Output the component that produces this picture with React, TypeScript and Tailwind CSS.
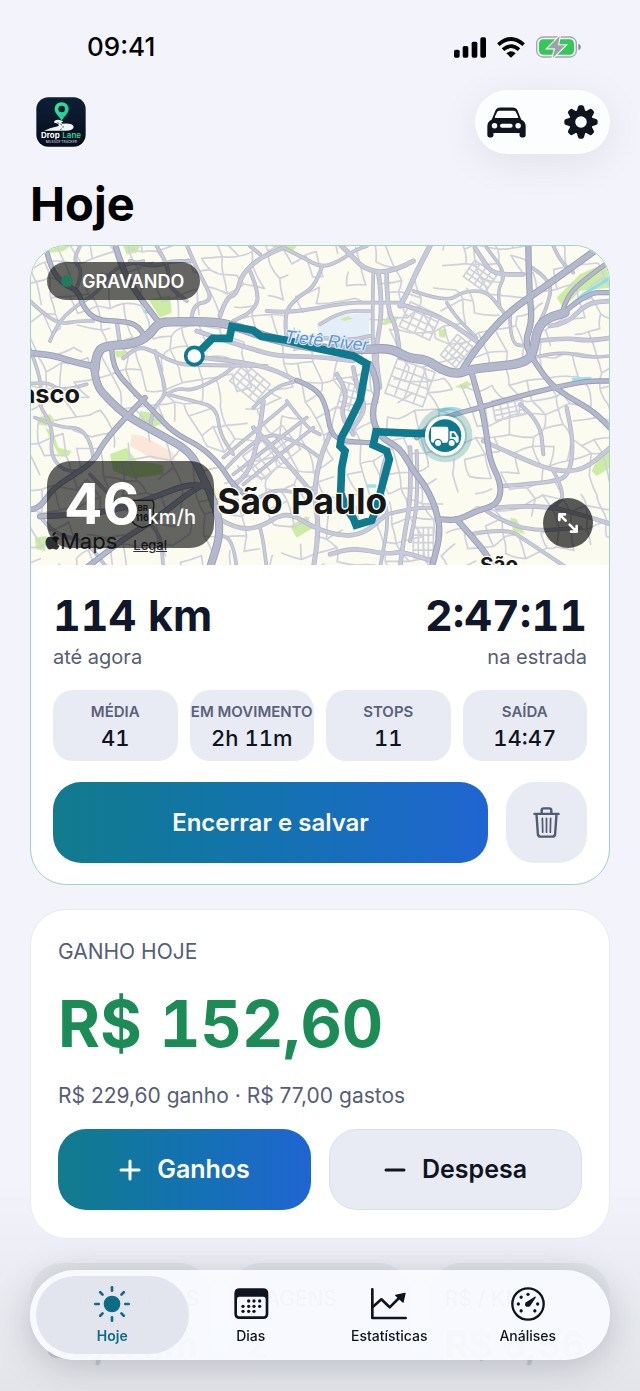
import { useState } from "react";
import type { ReactNode } from "react";

type Road = { w: number; pts: string };

// width + waypoints, in map units (3 per pixel)
const HIGHWAYS: Road[] = [
  { w: 18, pts: "20,335 90,340 150,360 215,375" },
  { w: 26, pts: "225,385 228,330 265,313 340,310 385,285 415,245 460,242 590,242 660,260 740,290 900,325 1040,325 1115,322 1165,352 1220,355 1260,385 1310,400 1350,385 1440,375 1500,368 1540,345 1550,265 1580,232 1635,215" },
  { w: 14, pts: "1625,220 1700,155 1770,155" },
  { w: 14, pts: "75,10 90,80 130,130 175,150 190,200 230,238 300,240 350,250 378,290" },
  { w: 16, pts: "285,10 310,90 345,150 412,238" },
  { w: 22, pts: "222,370 225,430 270,480 320,525 420,580 510,630 545,700 590,800 602,880 570,980" },
  { w: 14, pts: "275,325 278,380 330,440 400,510 460,575 540,615 600,670 640,735 690,770" },
  { w: 15, pts: "375,470 320,525 250,605 225,655 180,690 100,740 60,800 20,808" },
  { w: 17, pts: "1525,10 1527,150 1537,240 1515,300 1535,350" },
  { w: 19, pts: "1730,25 1600,120 1460,215 1370,320 1322,395" },
  { w: 13, pts: "1770,60 1700,110 1645,160 1625,220" },
  { w: 15, pts: "1540,355 1580,420 1640,465 1720,510 1775,565" },
  { w: 14, pts: "1190,590 1230,550 1300,520 1380,500 1500,465 1600,440 1700,420 1775,420" },
  { w: 16, pts: "1355,395 1370,450 1385,500 1400,580 1410,660 1445,730 1435,790 1370,810 1310,838 1260,835" },
  { w: 17, pts: "1050,370 1080,430 1052,520 1080,590 1140,620 1180,690 1220,740 1250,810 1262,880 1235,980" },
  { w: 17, pts: "1310,835 1350,880 1400,940 1420,980" },
  { w: 13, pts: "830,418 890,440 920,500 930,570 960,600 1050,605" },
  { w: 16, pts: "60,826 250,820 400,770 500,730 560,735" },
  { w: 16, pts: "200,980 300,900 400,840 500,760 560,725" },
];

const ROADS: Road[] = [
  { w: 12, pts: "600,225 618,170 650,160 665,100 720,50 790,20" },
  { w: 10, pts: "515,240 515,190 580,180 545,110 520,60 500,10" },
  { w: 10, pts: "690,90 720,160 700,210 640,240" },
  { w: 10, pts: "720,40 690,15" },
  { w: 10, pts: "790,20 850,50 905,80 960,60 1000,30 1040,15" },
  { w: 10, pts: "800,290 790,220 830,170 880,140 905,80" },
  { w: 10, pts: "740,210 800,215 900,200" },
  { w: 11, pts: "290,240 300,310" },
  { w: 10, pts: "310,352 350,315 400,330 440,355 490,372 560,372 740,375" },
  { w: 12, pts: "530,270 620,300 700,325 770,345 900,348 1000,360" },
  { w: 12, pts: "550,350 640,360 750,380 830,420" },
  { w: 9, pts: "405,330 425,400 440,460 400,500 390,560" },
  { w: 9, pts: "440,460 470,440 515,450 600,410 650,370" },
  { w: 9, pts: "440,460 520,480 590,500 600,580 640,640" },
  { w: 9, pts: "20,170 60,210 120,250 170,240 220,240" },
  { w: 9, pts: "90,300 110,250 160,200 240,150 280,80 370,60" },
  { w: 9, pts: "170,140 190,90 160,60 180,15" },
  { w: 10, pts: "410,15 450,80 440,130 500,180" },
  { w: 10, pts: "330,60 400,80 450,60 520,60" },
  { w: 9, pts: "20,430 80,420 120,450 200,430" },
  { w: 9, pts: "20,300 70,420 50,480 100,560 90,640 130,690 180,690" },
  { w: 9, pts: "45,530 120,560 180,560 210,600 220,650" },
  { w: 9, pts: "900,200 980,185 1060,185 1140,185" },
  { w: 13, pts: "960,10 1000,50 1030,80 1075,95 1130,85 1180,60" },
  { w: 14, pts: "1230,15 1190,90 1165,150 1140,195" },
  { w: 12, pts: "1075,95 1090,200 1065,330 1080,440" },
  { w: 9, pts: "1060,95 1055,300 1070,430" },
  { w: 12, pts: "1100,90 1100,200 1130,260 1140,350" },
  { w: 12, pts: "1140,190 1230,215 1300,250 1375,305" },
  { w: 9, pts: "1180,150 1280,185 1330,150 1400,150 1440,200 1460,225" },
  { w: 8, pts: "1280,185 1300,220 1370,290" },
  { w: 12, pts: "1365,20 1390,60 1420,100 1510,100" },
  { w: 8, pts: "1440,200 1430,150 1460,100 1400,20" },
  { w: 9, pts: "1600,15 1620,60 1660,95" },
  { w: 9, pts: "1535,80 1600,120 1580,200 1560,240" },
  { w: 12, pts: "1590,255 1640,250 1700,185 1775,180" },
  { w: 12, pts: "1550,300 1640,290 1700,300 1775,290" },
  { w: 8, pts: "1540,350 1620,330 1700,350 1775,345" },
  { w: 9, pts: "1470,220 1470,310 1520,315" },
  { w: 9, pts: "900,250 960,210 1050,210" },
  { w: 10, pts: "900,290 980,300 1050,285" },
  { w: 12, pts: "1390,600 1500,650 1600,690 1690,690 1770,620" },
  { w: 11, pts: "1450,735 1600,725 1650,700 1660,600 1640,500" },
  { w: 12, pts: "1430,800 1560,790 1680,820 1775,850" },
  { w: 10, pts: "1400,810 1460,850 1560,870 1680,860" },
  { w: 10, pts: "1350,880 1460,860 1520,900 1640,980" },
  { w: 9, pts: "1600,690 1640,760 1600,800" },
  { w: 10, pts: "1500,490 1560,540 1570,640" },
  { w: 12, pts: "600,835 650,865 720,860 800,810 880,860 960,885 1030,880 1100,820" },
  { w: 10, pts: "1100,820 1180,800 1250,800" },
  { w: 12, pts: "1170,620 1175,760 1150,900 1140,980" },
  { w: 10, pts: "1190,630 1195,780 1170,900" },
  { w: 9, pts: "1100,640 1070,720 1110,820 1080,980" },
  { w: 13, pts: "880,980 900,870 880,760 900,650 930,580" },
  { w: 12, pts: "950,400 985,450 960,520 1000,580" },
  { w: 12, pts: "1000,380 1010,440 1040,500 1000,560" },
  { w: 9, pts: "620,680 720,570 830,600 900,650" },
  { w: 12, pts: "730,480 720,570 690,690 640,735" },
  { w: 9, pts: "640,700 860,530" },
  { w: 9, pts: "670,730 880,560" },
  { w: 9, pts: "610,650 800,490" },
  { w: 12, pts: "700,560 760,620 830,700 880,760" },
  { w: 9, pts: "800,480 860,560 900,580" },
  { w: 9, pts: "700,780 760,740 840,760 880,740" },
  { w: 9, pts: "700,500 760,440 830,420" },
  { w: 9, pts: "210,700 300,800 420,860 430,980" },
  { w: 9, pts: "60,826 100,880 200,900 260,980" },
  { w: 9, pts: "650,980 640,900 600,880" },
  { w: 9, pts: "740,980 730,900 720,860" },
  { w: 12, pts: "1235,960 1150,930 1100,940 1000,920 930,940" },
];

const PARKS = [
  "70,15 150,15 130,30 90,35",
  "310,15 360,15 350,35 320,40",
  "385,175 450,165 455,215 420,230",
  "285,330 320,330 310,350 288,348",
  "755,15 830,15 820,28 770,25",
  "50,530 90,520 105,540 80,555 55,550",
  "360,510 430,520 435,545 390,562 355,540",
  "270,640 320,620 350,660 430,672 430,700 340,712 280,690",
  "45,890 80,885 75,930 48,925",
  "810,855 860,825 880,860 830,890",
  "1085,250 1100,230 1135,225 1130,240 1095,252",
  "1255,265 1280,265 1275,290 1258,288",
  "1305,438 1340,420 1355,430 1335,445",
  "1610,170 1680,100 1770,60 1770,140 1680,150 1630,200",
  "1715,690 1740,640 1770,615 1770,680 1730,705",
  "1470,830 1490,835 1515,880 1480,870",
  "560,760 585,740 590,800 570,800",
  "75,560 100,575 115,620 155,630 145,645 115,640",
];

const ROUTE =
  "M540 330 L578 292 L628 292 L636 256 L700 268 L724 286 L800 298 L905 325 L1000 345 L1040 368 L1020 478 L980 560 L964 590 L960 615 L975 630 L965 680 L962 755 L978 800 L1000 832 L1008 852 L1055 838 L1070 800 L1085 740 L1108 655 L1100 630 L1060 612 L1068 572 L1180 577 L1240 577";

// rounds the corners of a waypoint list through its midpoints
function curve(pts: string) {
  const p = pts.split(" ").map((s) => s.split(",").map(Number));
  let d = `M${p[0][0]} ${p[0][1]}`;
  for (let i = 1; i < p.length - 1; i++) {
    const mx = (p[i][0] + p[i + 1][0]) / 2;
    const my = (p[i][1] + p[i + 1][1]) / 2;
    d += ` Q${p[i][0]} ${p[i][1]} ${mx} ${my}`;
  }
  const last = p[p.length - 1];
  return `${d} L${last[0]} ${last[1]}`;
}

// side streets: a jittered grid with some of the blocks left open
function buildStreets() {
  let seed = 29;
  const rnd = () => {
    seed = (seed * 1664525 + 1013904223) % 4294967296;
    return seed / 4294967296;
  };
  const step = 50;
  const cols = 40;
  const rows = 24;
  const nodes: number[][][] = [];
  for (let r = 0; r < rows; r++) {
    nodes.push([]);
    for (let c = 0; c < cols; c++) {
      nodes[r].push([
        Math.round(c * step + r * 14 - 300 + (rnd() - 0.5) * 34),
        Math.round(r * step - c * 8 + 30 + (rnd() - 0.5) * 34),
      ]);
    }
  }
  let d = "";
  const link = (a: number[], b: number[]) => {
    const mx = Math.round((a[0] + b[0]) / 2 + (rnd() - 0.5) * 12);
    const my = Math.round((a[1] + b[1]) / 2 + (rnd() - 0.5) * 12);
    d += `M${a[0]} ${a[1]}Q${mx} ${my} ${b[0]} ${b[1]}`;
  };
  for (let r = 0; r < rows; r++) {
    for (let c = 0; c < cols; c++) {
      if (c + 1 < cols && rnd() > 0.42) link(nodes[r][c], nodes[r][c + 1]);
      if (r + 1 < rows && rnd() > 0.42) link(nodes[r][c], nodes[r + 1][c]);
    }
  }
  return d;
}

// dense downtown blocks: x, y, width, height, angle
const BLOCKS = [
  [1340, 75, 80, 60, 35],
  [1110, 370, 120, 110, 20],
  [1150, 200, 100, 80, 25],
  [640, 390, 100, 70, 40],
  [960, 430, 70, 80, 15],
  [680, 590, 150, 90, -38],
  [1180, 860, 60, 90, 0],
  [1420, 470, 90, 60, -12],
  [1270, 300, 80, 60, -50],
];

const STREETS = buildStreets();

function CityMap() {
  return (
    <svg
      viewBox="30 15 1740 957"
      preserveAspectRatio="xMidYMid slice"
      className="block h-full w-full"
      role="img"
      aria-label="Mapa do trajeto em São Paulo"
      fill="none"
      strokeLinejoin="round"
      strokeLinecap="round"
    >
      <rect x="0" y="0" width="1800" height="1000" fill="#fbfbef" />
      {PARKS.map((p) => (
        <polygon key={p} points={p} fill="#caeda3" />
      ))}
      <path d="M335 580 L370 585 L460 635 L465 660 L400 655 L330 615Z M740 600 L775 605 L760 625Z" fill="#fbe6da" />

      <path d={STREETS} stroke="#d0d1dd" strokeWidth="5" />
      {BLOCKS.map(([x, y, w, h, a]) => (
        <g key={`${x}-${y}`} transform={`rotate(${a} ${x + w / 2} ${y + h / 2})`} stroke="#d0d1dd" strokeWidth="5">
          <rect x={x} y={y} width={w} height={h} />
          <path d={`M${x} ${y + h / 4}h${w}M${x} ${y + h / 2}h${w}M${x} ${y + (h * 3) / 4}h${w}`} />
          <path d={`M${x + w / 4} ${y}v${h}M${x + w / 2} ${y}v${h}M${x + (w * 3) / 4} ${y}v${h}`} />
        </g>
      ))}

      <path d="M890 245 L950 222 L1050 215 L1046 290 L900 300Z" fill="#e4eef8" />
      <path d="M960 235 L985 226 L998 233 L975 240Z" fill="#caeda3" />
      <path d="M1632 212 L1690 160 L1740 130 L1770 110" stroke="#8adcf2" strokeWidth="9" />
      <path d="M1260 510 Q1290 495 1330 510 M1660 415 L1710 412 M375 212 L385 214 M820 800 L825 830 M1045 735 L1065 735" stroke="#9be0ee" strokeWidth="10" />

      {ROADS.map((r) => (
        <path key={r.pts} d={curve(r.pts)} stroke="#b1b4c6" strokeWidth={r.w + 2} />
      ))}
      {ROADS.map((r) => (
        <path key={r.pts} d={curve(r.pts)} stroke="#c8cad9" strokeWidth={r.w - 2} />
      ))}
      {HIGHWAYS.map((r) => (
        <path key={r.pts} d={curve(r.pts)} stroke="#959bb2" strokeWidth={r.w + 2} />
      ))}
      {HIGHWAYS.map((r) => (
        <path key={r.pts} d={curve(r.pts)} stroke="#b3b8cd" strokeWidth={r.w - 3} />
      ))}

      <g strokeWidth="4">
        <path d="M338 778 H398 Q404 790 400 802 V838 Q398 852 368 860 Q338 852 336 838 V802 Q332 790 338 778Z" fill="#e3e3de" stroke="#3a3a3a" />
        <text x="368" y="810" fontSize="24" fontWeight="700" textAnchor="middle" fill="#333">BR</text>
        <text x="366" y="840" fontSize="27" fontWeight="700" textAnchor="middle" fill="#333">116</text>
      </g>

      <path d={ROUTE} stroke="#0f7a8e" strokeWidth="23" strokeLinejoin="miter" />
      <circle cx="523" cy="345" r="26" fill="#fff" stroke="#0f7a8e" strokeWidth="11" />

      <g paintOrder="stroke" stroke="#fdfdf6">
        <text
          x="793"
          y="303"
          fontSize="52"
          fontStyle="italic"
          fill="#5d97cf"
          stroke="#e4eef8"
          strokeWidth="6"
          transform="rotate(6 793 303)"
          className="font-['Liberation_Sans',sans-serif]"
        >
          Tietê River
        </text>
        <text x="180" y="486" fontSize="76" fontWeight="700" textAnchor="end" fill="#161616" strokeWidth="8">Osasco</text>
        <text x="592" y="820" fontSize="106" fontWeight="700" fill="#161616" strokeWidth="8">São Paulo</text>
        <text x="1380" y="992" fontSize="62" fontWeight="700" fill="#161616" strokeWidth="8">São</text>
      </g>

      <circle cx="1275" cy="582" r="82" fill="#0f7a8e" opacity="0.24" />
      <circle cx="1275" cy="584" r="66" fill="#0f7a8e" opacity="0.25" />
      <circle cx="1275" cy="584" r="60" fill="#fff" />
      <circle cx="1275" cy="584" r="49" fill="#10788c" />
      <g fill="#fff">
        <rect x="1233" y="557" width="52" height="48" rx="6" />
        <path d="M1289 571 H1301 Q1306 571 1308 575 L1316 588 V601 Q1316 605 1312 605 H1289Z" />
        <path d="M1295 576 H1301 L1309 588 H1295Z" fill="#10788c" />
        <circle cx="1254" cy="606" r="11" stroke="#10788c" strokeWidth="4" />
        <circle cx="1295" cy="606" r="11" stroke="#10788c" strokeWidth="4" />
      </g>
    </svg>
  );
}

function StatusBar() {
  return (
    <div className="flex h-[90px] items-start justify-between pr-[29px] pl-[57px] pt-[31px]">
      <span className="text-[26px] leading-8 font-medium text-black">09:41</span>
      <div className="flex h-8 items-center gap-[11px]">
        <svg width="32" height="21" viewBox="0 0 96 63" aria-hidden="true">
          <rect x="0" y="38" width="17" height="24" rx="5" />
          <rect x="26" y="27" width="17" height="35" rx="5" />
          <rect x="53" y="14" width="17" height="48" rx="5" />
          <rect x="79" y="1" width="17" height="61" rx="5" />
        </svg>
        <svg width="28" height="21" viewBox="0 0 84 63" fill="none" stroke="#000" strokeWidth="11" aria-hidden="true">
          <path d="M4 23 Q42 -11 80 23" />
          <path d="M18 38 Q42 17 66 38" />
          <path d="M42 62 L28 49 Q42 37 56 49Z" fill="#000" stroke="none" />
        </svg>
        <svg width="45" height="22" viewBox="0 0 135 66" fill="none" aria-hidden="true">
          <rect x="2" y="3" width="119" height="60" rx="19" stroke="#a6a7ab" strokeWidth="4" />
          <path d="M127 23 Q135 26 135 33 Q135 40 127 43Z" fill="#8f9094" />
          <rect x="9" y="10" width="105" height="46" rx="13" fill="#34c759" />
          <path d="M71 0 L35 37 H57 L50 66 L88 28 H66Z" fill="#9fa1a5" stroke="#f2f3fb" strokeWidth="7" paintOrder="stroke" />
        </svg>
      </div>
    </div>
  );
}

function AppLogo() {
  return (
    <svg width="50" height="50" viewBox="0 0 150 150" role="img" aria-label="Drop Lane Mileage Tracker">
      <defs>
        <linearGradient id="logo-bg" x1="0" y1="0" x2="0" y2="1">
          <stop offset="0" stopColor="#0d2036" />
          <stop offset="1" stopColor="#050d1c" />
        </linearGradient>
        <linearGradient id="logo-pin" x1="0" y1="0" x2="1" y2="1">
          <stop offset="0" stopColor="#35e69a" />
          <stop offset="1" stopColor="#19c795" />
        </linearGradient>
      </defs>
      <rect x="1" y="1" width="148" height="148" rx="36" fill="url(#logo-bg)" />
      <path d="M77 16 C64 16 56 25 56 37 C56 50 70 58 77 72 C84 58 98 50 98 37 C98 25 90 16 77 16Z" fill="url(#logo-pin)" />
      <circle cx="77" cy="36" r="10" fill="#0b1a2e" />
      <path d="M56 71 Q66 65 77 71 Q84 73 80 75 Q72 77 80 80 Q112 78 113 90 Q112 101 88 101 H24 Q44 92 66 88 Q72 83 62 79 Q50 77 56 71Z" fill="#f2f5f8" />
      <path d="M72 99 Q86 91 80 85 L64 77" fill="none" stroke="#0b1a2e" strokeWidth="2" strokeDasharray="6 4" />
      <text x="15" y="124" fontSize="24" fontWeight="700" fill="#fff">Drop</text>
      <text x="79" y="124" fontSize="24" fontWeight="600" fill="#2ad79a">Lane</text>
      <text x="76" y="137" fontSize="10" fontWeight="600" textAnchor="middle" fill="#a9b4c2">MILEAGE TRACKER</text>
    </svg>
  );
}

function Header() {
  return (
    <header>
      <div className="flex h-16 items-center justify-between pl-[6px]">
        <AppLogo />
        <div className="flex h-16 w-[135px] items-center justify-between rounded-full bg-[#fbfdff] px-3 shadow-[0_8px_40px_rgba(0,0,0,0.08)]">
          <button type="button" aria-label="Veículos" className="cursor-pointer">
            <svg width="39" height="31" viewBox="0 0 114 89" fill="#10141f">
              <path d="M14 36 L25 9 Q29 1 39 1 H75 Q85 1 89 9 L100 36 Q113 42 113 56 V82 Q113 88 107 88 H101 Q95 88 95 82 V75 H19 V82 Q19 88 13 88 H7 Q1 88 1 82 V56 Q1 42 14 36Z" />
              <path d="M36 10 H78 Q82 10 84 13 L91 28 Q92 31 89 31 H25 Q22 31 23 28 L30 13 Q32 10 36 10Z" fill="#fbfdff" />
              <circle cx="22" cy="54" r="8" fill="#fbfdff" />
              <circle cx="91" cy="54" r="8" fill="#fbfdff" />
              <rect x="38" y="48" width="37" height="12" rx="6" fill="#fbfdff" />
            </svg>
          </button>
          <button type="button" aria-label="Ajustes" className="cursor-pointer">
            <svg width="34" height="34" viewBox="-50 -50 100 100" fill="#10141f">
              {[0, 45, 90, 135, 180, 225, 270, 315].map((a) => (
                <path key={a} d="M-13 -30 L-9 -44 Q-8 -49 -3 -49 H3 Q8 -49 9 -44 L13 -30Z" transform={`rotate(${a})`} />
              ))}
              <circle r="35" />
              <circle r="17" fill="#fbfdff" />
            </svg>
          </button>
        </div>
      </div>
      <h1 className="pt-5 text-[47px] leading-[60px] font-bold text-black">Hoje</h1>
    </header>
  );
}

function MapPanel() {
  return (
    <div className="relative h-[319px] overflow-hidden">
      <CityMap />
      <div className="absolute bottom-2 left-[14px] flex items-baseline gap-4 text-[#2f3033]">
        <span className="flex items-center text-[22px] leading-8">
          <svg width="15" height="18" viewBox="0 0 42 50" fill="currentColor" aria-hidden="true">
            <path d="M30 0 Q30 9 21 11 Q20 3 30 0Z M21 15 Q25 12 30 12 Q36 12 40 18 Q33 22 34 29 Q35 36 41 38 Q36 49 30 49 Q25 47 21 47 Q17 47 14 49 Q7 49 3 37 Q-1 24 6 16 Q10 12 15 13Z" />
          </svg>
          Maps
        </span>
        <a href="#legal" className="text-[13px] font-medium underline">Legal</a>
      </div>
      <div className="absolute top-4 left-4 flex h-[38px] items-center gap-[9px] rounded-full bg-black/60 pr-4 pl-[14px] text-[17px] font-semibold text-white">
        <span className="h-3 w-3 rounded-full bg-[#247a5c]" />
        <span className="text-[18px]">GRAVANDO</span>
      </div>
      <div className="absolute bottom-[17px] left-4 flex h-[87px] w-[167px] items-baseline gap-2 rounded-[24px] bg-black/60 pt-3 pl-[17px] text-white">
        <span className="text-[57px] leading-[62px] font-bold">46</span>
        <span className="text-[20px] font-medium">km/h</span>
      </div>
      <button
        type="button"
        aria-label="Expandir mapa"
        className="absolute right-4 bottom-[17px] flex h-[50px] w-[50px] cursor-pointer items-center justify-center rounded-full bg-black/65"
      >
        <svg width="22" height="22" viewBox="0 0 66 66" fill="none" stroke="#fff" strokeWidth="8" strokeLinecap="round" strokeLinejoin="round">
          <path d="M26 26 L7 7 M7 24 V7 H24" />
          <path d="M38 38 L59 59 M59 42 V59 H42" />
        </svg>
      </button>
    </div>
  );
}

const STATS = [
  { label: "MÉDIA", value: "41" },
  { label: "EM MOVIMENTO", value: "2h 11m" },
  { label: "STOPS", value: "11" },
  { label: "SAÍDA", value: "14:47" },
];

function TripCard() {
  return (
    <section className="overflow-hidden rounded-[36px] border border-[#9fd3bd] bg-white">
      <MapPanel />
      <div className="px-[22px] pt-6 pb-[21px]">
        <div className="flex justify-between">
          <div>
            <p className="text-[43px] leading-[52px] font-bold text-[#10172a] tabular-nums">114 km</p>
            <p className="text-[20px] leading-8 text-[#565d78]">até agora</p>
          </div>
          <div className="text-right">
            <p className="text-[43px] leading-[52px] font-bold text-[#10172a] tabular-nums">2:47:11</p>
            <p className="text-[20px] leading-8 text-[#565d78]">na estrada</p>
          </div>
        </div>
        <dl className="mt-[17px] grid grid-cols-4 gap-3">
          {STATS.map((s) => (
            <div key={s.label} className="flex h-[71px] flex-col items-center justify-center rounded-[20px] bg-[#e8ebf4]">
              <dt className="text-[15px] leading-6 font-semibold whitespace-nowrap text-[#5a617a]">{s.label}</dt>
              <dd className="text-[22px] leading-7 font-medium text-[#10141f] tabular-nums">{s.value}</dd>
            </div>
          ))}
        </dl>
        <div className="mt-[21px] flex gap-[18px]">
          <button
            type="button"
            className="h-[81px] flex-1 cursor-pointer rounded-[28px] bg-linear-to-r from-[#127b8c] to-[#2065d2] text-[24px] font-semibold text-white"
          >
            Encerrar e salvar
          </button>
          <button
            type="button"
            aria-label="Descartar"
            className="flex h-[81px] w-[81px] cursor-pointer items-center justify-center rounded-[28px] bg-[#e8ebf4]"
          >
            <svg width="27" height="31" viewBox="0 0 78 90" fill="none" stroke="#525b70" strokeWidth="7" strokeLinecap="round" strokeLinejoin="round">
              <path d="M4 20 H74" />
              <path d="M25 19 V10 Q25 4 31 4 H47 Q53 4 53 10 V19" />
              <path d="M10 21 L14 79 Q15 86 22 86 H56 Q63 86 64 79 L68 21" />
              <path d="M27 33 L28 73 M39 33 V73 M51 33 L50 73" strokeWidth="5" />
            </svg>
          </button>
        </div>
      </div>
    </section>
  );
}

function EarningsCard() {
  return (
    <section className="rounded-[36px] border border-[#e9ebf3] bg-white px-[27px] pt-[26px] pb-7">
      <h2 className="text-[21px] leading-8 text-[#565d78]">GANHO HOJE</h2>
      <p className="mt-3 text-[64px] leading-[88px] font-bold text-[#1b8c55] tabular-nums">R$ 152,60</p>
      <p className="mt-3 text-[21px] leading-8 text-[#565d78]">R$ 229,60 ganho · R$ 77,00 gastos</p>
      <div className="mt-[17px] grid grid-cols-2 gap-[18px]">
        <button
          type="button"
          className="flex h-[81px] cursor-pointer items-center justify-center gap-4 rounded-[28px] bg-linear-to-r from-[#127b8c] to-[#2065d2] text-[25px] font-semibold text-white"
        >
          <svg width="22" height="22" viewBox="0 0 22 22" stroke="currentColor" strokeWidth="3" strokeLinecap="round" aria-hidden="true">
            <path d="M11 2 V20 M2 11 H20" />
          </svg>
          Ganhos
        </button>
        <button
          type="button"
          className="flex h-[81px] cursor-pointer items-center justify-center gap-4 rounded-[28px] border border-[#dcdfe9] bg-[#e8ebf4] text-[25px] font-semibold text-[#10141f]"
        >
          <svg width="22" height="22" viewBox="0 0 22 22" stroke="currentColor" strokeWidth="3" strokeLinecap="round" aria-hidden="true">
            <path d="M2 11 H20" />
          </svg>
          Despesa
        </button>
      </div>
    </section>
  );
}

const SUMMARY = [
  { label: "QUILÔMETROS", value: "38,11 km" },
  { label: "VIAGENS", value: "2" },
  { label: "R$ / KM", value: "R$ 6,56" },
];

function SummaryRow() {
  return (
    <div className="grid grid-cols-3 gap-[18px]">
      {SUMMARY.map((s) => (
        <div key={s.label} className="h-[127px] rounded-t-[32px] bg-linear-to-b from-[#e0e3e8] to-transparent to-80% pt-5 pl-4">
          <p className="text-[21px] leading-8 whitespace-nowrap text-[#a2a9b8]">{s.label}</p>
          <p className="mt-2 text-[37px] leading-[44px] font-bold whitespace-nowrap text-[#c5c9cf]">{s.value}</p>
        </div>
      ))}
    </div>
  );
}

const TABS: { label: string; icon: ReactNode }[] = [
  {
    label: "Hoje",
    icon: (
      <svg width="36" height="36" viewBox="-54 -54 108 108" stroke="currentColor" strokeWidth="8" strokeLinecap="round">
        <circle r="25" fill="currentColor" stroke="none" />
        {[0, 45, 90, 135, 180, 225, 270, 315].map((a) => (
          <path key={a} d="M0 -50 V-40" transform={`rotate(${a})`} />
        ))}
      </svg>
    ),
  },
  {
    label: "Dias",
    icon: (
      <svg width="36" height="36" viewBox="0 0 108 108" fill="currentColor">
        <path fillRule="evenodd" d="M20 7 H90 Q106 7 106 23 V84 Q106 99 90 99 H20 Q4 99 4 84 V23 Q4 7 20 7Z M19 32 Q12 32 12 39 V83 Q12 91 21 91 H89 Q98 91 98 83 V39 Q98 32 91 32Z" />
        {[[47, 45], [63, 45], [80, 45], [30, 61], [47, 61], [63, 61], [80, 61], [30, 76], [47, 76], [63, 76]].map(([x, y]) => (
          <circle key={`${x}-${y}`} cx={x} cy={y} r="5" />
        ))}
      </svg>
    ),
  },
  {
    label: "Estatísticas",
    icon: (
      <svg width="36" height="36" viewBox="0 0 108 108" fill="none" stroke="currentColor" strokeWidth="8" strokeLinecap="round" strokeLinejoin="round">
        <path d="M4 10 V96 H104" />
        <path d="M6 62 L31 40 L56 64 L84 36" />
        <path d="M102 22 L96 48 L74 28Z" fill="currentColor" strokeWidth="4" />
      </svg>
    ),
  },
  {
    label: "Análises",
    icon: (
      <svg width="36" height="36" viewBox="-54 -54 108 108" fill="currentColor">
        <circle r="47" fill="none" stroke="currentColor" strokeWidth="7" />
        {[-135, -90, -45, 0, 90, 135].map((a) => (
          <circle key={a} cy="-29" r="5" transform={`rotate(${a})`} />
        ))}
        <path d="M20 -22 Q24 -24 23 -19 L7 5 Q2 10 -5 8 Q-13 3 -6 -5Z" />
      </svg>
    ),
  },
];

function TabBar() {
  const [active, setActive] = useState("Hoje");
  return (
    <nav className="fixed inset-x-[30px] bottom-[31px] grid h-[90px] grid-cols-4 rounded-full bg-[#f9fbff]/92 px-[13px] py-[6px] shadow-[0_6px_36px_rgba(60,66,80,0.26)]">
      {TABS.map((t) => (
        <button
          key={t.label}
          type="button"
          onClick={() => setActive(t.label)}
          className={`flex cursor-pointer flex-col items-center justify-center rounded-full pt-[2px] text-[14px] leading-5 ${
            t.label === active ? "-mx-[7px] bg-[#dfe2eb]/90 font-semibold text-[#0c6c86]" : "font-medium text-[#10141f]"
          }`}
        >
          {t.icon}
          <span className="pt-1">{t.label}</span>
        </button>
      ))}
    </nav>
  );
}

export default function App() {
  return (
    <div className="min-h-screen overflow-hidden bg-[#f2f3fb] bg-linear-to-b from-[#f2f3fb] from-85% to-[#e3e5ea] font-['Inter',sans-serif]">
      <main className="px-[30px]">
        <StatusBar />
        <Header />
        <div className="flex flex-col gap-6 pt-[11px]">
          <TripCard />
          <EarningsCard />
          <SummaryRow />
        </div>
      </main>
      <TabBar />
    </div>
  );
}
